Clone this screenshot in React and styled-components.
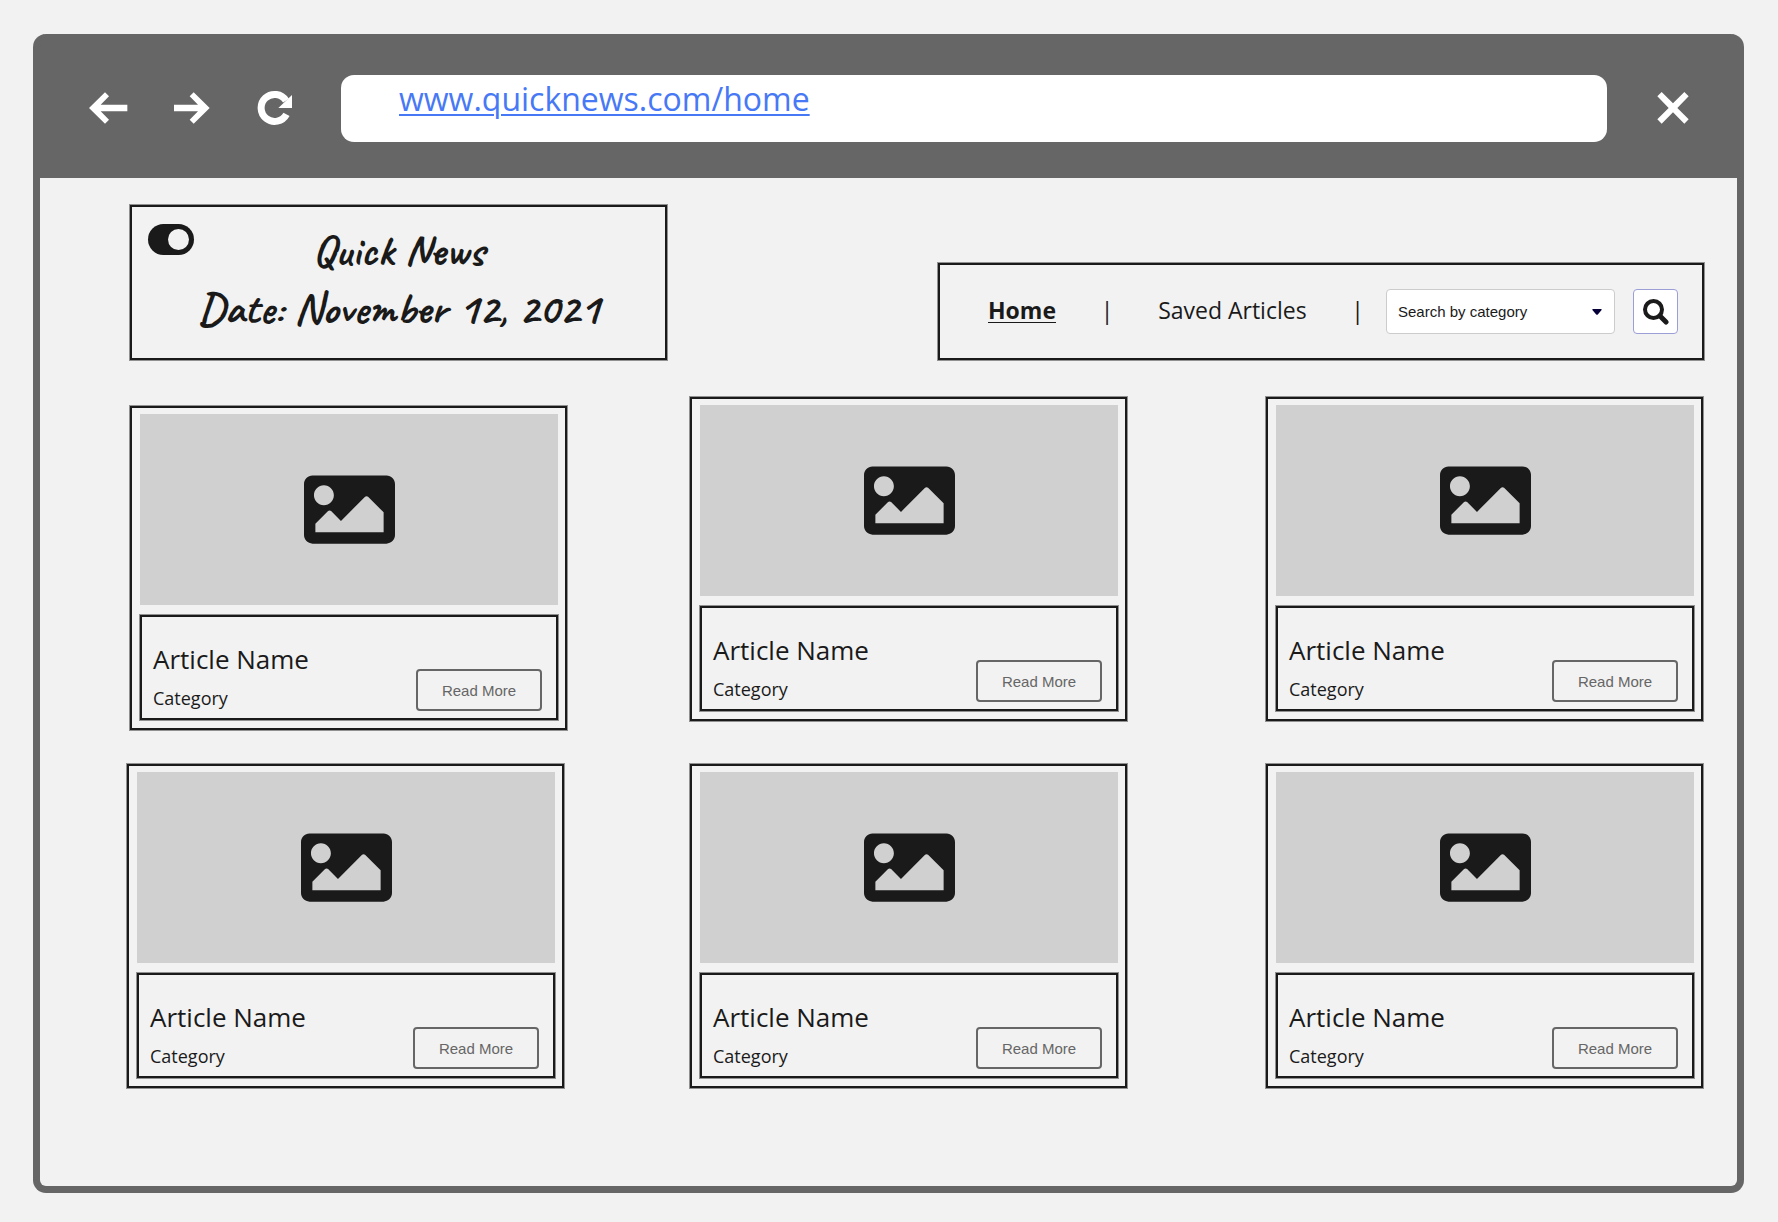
import React, { useState } from "react";
import styled, { createGlobalStyle, css } from "styled-components";
import { FaImage } from "react-icons/fa";

const ink = "#1a1a1a";
const chrome = "#666666";
const paper = "#f2f2f2";

const GlobalStyle = createGlobalStyle`
  *, *::before, *::after { box-sizing: border-box; }
  body {
    margin: 0;
    background: ${paper};
    color: ${ink};
    font-family: "Open Sans", "Noto Sans", sans-serif;
  }
  button, select, input { font: inherit; color: inherit; }
`;

const outlined = css`
  border: 2px solid ${ink};
  box-shadow: 0 0 0 1px rgba(26, 26, 26, 0.45);
`;

const Page = styled.div`
  display: flex;
  min-height: 100vh;
  padding: 34px 34px 29px 33px;
`;

const BrowserWindow = styled.div`
  flex: 1;
  min-width: 0;
  display: flex;
  flex-direction: column;
  border: 7px solid ${chrome};
  border-top: 0;
  border-radius: 13px;
  background: ${chrome};
`;

const Toolbar = styled.header`
  display: flex;
  align-items: center;
  height: 144px;
  padding: 4px 43px 0 47px;
`;

const ToolButtons = styled.div`
  display: flex;
  gap: 40px;
  margin-right: 45px;
`;

const ToolButton = styled.button`
  display: grid;
  place-items: center;
  width: 43px;
  height: 44px;
  padding: 0;
  border: 0;
  background: none;
  cursor: pointer;

  svg { display: block; fill: #fff; }
`;

const AddressBar = styled.div`
  flex: 1;
  height: 67px;
  margin-right: 44px;
  padding: 2px 58px;
  border-radius: 13px;
  background: #fff;
`;

const Address = styled.a`
  font-size: 32px;
  line-height: 44px;
  color: #4778f5;
  text-decoration-thickness: 2px;
  text-underline-offset: 3px;
`;

const Content = styled.main`
  flex: 1;
  padding: 27px 33px 90px 87px;
  border-radius: 0 0 6px 6px;
  background: ${paper};
`;

const Masthead = styled.div`
  display: flex;
  align-items: flex-end;
  justify-content: space-between;
  gap: 40px;
  padding-left: 3px;
  margin-bottom: 37px;
`;

const TitleBox = styled.section`
  ${outlined}
  display: flex;
  flex: 0 1 537px;
  height: 155px;
  padding: 15px 16px;
`;

const Toggle = styled.input`
  appearance: none;
  flex: none;
  display: flex;
  align-items: center;
  width: 46px;
  height: 31px;
  margin: 2px 0;
  padding: 0 5px;
  border-radius: 16px;
  background: ${ink};
  cursor: pointer;

  &::before {
    content: "";
    width: 21px;
    height: 21px;
    border-radius: 50%;
    background: ${paper};
  }
  &:checked { justify-content: flex-end; }
`;

const Titles = styled.div`
  flex: 1;
  padding-right: 46px;
  text-align: center;
  font-family: Caveat, cursive;
  font-size: 45px;
  line-height: 58px;
  white-space: nowrap;
`;

const Title = styled.h1`
  margin: 0;
  font: inherit;
  font-weight: 700;
`;

const DateLine = styled.p`
  margin: 0;
  font-weight: 700;
`;

const NavBox = styled.nav`
  ${outlined}
  display: flex;
  align-items: center;
  flex: 0 1 766px;
  height: 97px;
  padding: 0 24px 0 48px;
  white-space: nowrap;
`;

const Links = styled.div`
  flex: 1;
  display: flex;
  justify-content: space-between;
  padding: 0 22px 4px 0;
  font-size: 23px;
  line-height: 30px;
`;

const NavLink = styled.a`
  color: ${ink};
  font-weight: ${(p) => (p.$active ? 700 : 400)};
  text-decoration: ${(p) => (p.$active ? "underline" : "none")};
  text-decoration-thickness: 1px;
  text-underline-offset: 3px;
`;

const SearchForm = styled.form`
  display: flex;
  gap: 18px;
`;

const SelectWrap = styled.div`
  display: grid;
  align-items: center;

  > * { grid-area: 1 / 1; }
  svg { justify-self: end; margin-right: 13px; pointer-events: none; }
`;

const CategorySelect = styled.select`
  appearance: none;
  width: 229px;
  height: 45px;
  padding: 0 32px 0 11px;
  border: 1px solid #cccccc;
  border-radius: 4px;
  background: #fff;
  font-family: "Liberation Sans", Arial, sans-serif;
  font-size: 15px;
`;

const SearchButton = styled.button`
  display: grid;
  place-items: center;
  width: 45px;
  height: 45px;
  padding: 0;
  border: 1px solid #9c9fd6;
  border-radius: 4px;
  background: #fff;
  cursor: pointer;
`;

const Grid = styled.div`
  display: grid;
  grid-template-columns: 440fr 453fr 438fr;
  column-gap: 123px;
  row-gap: 34px;
`;

const Card = styled.article`
  ${outlined}
  display: flex;
  flex-direction: column;
  gap: 10px;
  width: min(100%, 437px);
  align-self: ${(p) => (p.$lowered ? "end" : "start")};
  justify-self: ${(p) => (p.$lowered ? "end" : "start")};
  margin-top: ${(p) => (p.$lowered ? "9px" : "0")};
  padding: 6px 7px 8px 8px;
`;

const Picture = styled.div`
  display: grid;
  place-items: center;
  height: 191px;
  background: #d0d0d0;
`;

const Summary = styled.div`
  ${outlined}
  display: flex;
  align-items: flex-end;
  justify-content: space-between;
  height: 105px;
  padding: 0 14px 7px 11px;
`;

const Name = styled.h2`
  margin: 0;
  font-size: 26px;
  font-weight: 400;
  line-height: 52px;
`;

const Category = styled.p`
  margin: 0;
  font-size: 18px;
  line-height: 26px;
`;

const ReadMore = styled.button`
  width: 126px;
  height: 42px;
  padding: 0;
  border: 2px solid ${chrome};
  border-radius: 4px;
  background: none;
  color: ${chrome};
  font-family: "Liberation Sans", Arial, sans-serif;
  font-size: 15px;
  cursor: pointer;
`;

const BackIcon = () => (
  <svg width="39" height="32" viewBox="207 217 117 96" aria-hidden="true">
    <path d="M207 265l48-47 12 12-25 25h80v20h-80l25 25-12 12z" />
  </svg>
);

const ForwardIcon = () => (
  <svg width="36" height="32" viewBox="462 217 108 96" aria-hidden="true">
    <path d="M569 265l-48-47-12 12 25 25h-72v20h72l-25 25 12 12z" />
  </svg>
);

const ReloadIcon = () => (
  <svg width="36" height="36" viewBox="711 210 108 108" aria-hidden="true">
    <path
      d="M798 242A40.5 40.5 0 1 0 799.5 283"
      style={{ fill: "none" }}
      stroke="#fff"
      strokeWidth="21"
    />
    <path d="M816 225v39h-41z" />
  </svg>
);

const CloseIcon = () => (
  <svg width="32" height="32" viewBox="290 214 96 96" aria-hidden="true">
    <path d="M304 214l34 34 34-34 13 13-34 35 34 34-13 13-34-34-34 34-13-13 34-34-34-35z" />
  </svg>
);

const CaretIcon = () => (
  <svg width="10" height="6" viewBox="0 0 10 6" aria-hidden="true">
    <path d="M1 0h8q1.2.5.4 1.3L5.8 5.4q-.8.8-1.6 0L.6 1.3Q-.2.5 1 0z" fill="#050038" />
  </svg>
);

const SearchIcon = () => (
  <svg width="26" height="26" viewBox="0 0 26 26" fill="none" stroke={ink} aria-hidden="true">
    <circle cx="10.5" cy="10.5" r="8.5" strokeWidth="4" />
    <path d="M17 17l6 6" strokeWidth="5" strokeLinecap="round" />
  </svg>
);

const articles = [1, 2, 3, 4, 5, 6].map((id) => ({
  id,
  name: "Article Name",
  category: "Category",
  lowered: id === 1,
}));

function ArticleCard({ article }) {
  return (
    <Card $lowered={article.lowered}>
      <Picture>
        <FaImage size={91} color={ink} aria-hidden="true" />
      </Picture>
      <Summary>
        <div>
          <Name>{article.name}</Name>
          <Category>{article.category}</Category>
        </div>
        <ReadMore type="button">Read More</ReadMore>
      </Summary>
    </Card>
  );
}

export default function App() {
  const [on, setOn] = useState(true);

  return (
    <>
      <GlobalStyle />
      <Page>
        <BrowserWindow>
          <Toolbar>
            <ToolButtons>
              <ToolButton type="button" aria-label="Back"><BackIcon /></ToolButton>
              <ToolButton type="button" aria-label="Forward"><ForwardIcon /></ToolButton>
              <ToolButton type="button" aria-label="Reload"><ReloadIcon /></ToolButton>
            </ToolButtons>
            <AddressBar>
              <Address href="#home">www.quicknews.com/home</Address>
            </AddressBar>
            <ToolButton type="button" aria-label="Close"><CloseIcon /></ToolButton>
          </Toolbar>
          <Content>
            <Masthead>
              <TitleBox>
                <Toggle
                  type="checkbox"
                  role="switch"
                  aria-label="Theme"
                  checked={on}
                  onChange={(e) => setOn(e.target.checked)}
                />
                <Titles>
                  <Title>Quick News</Title>
                  <DateLine>Date: November 12, 2021</DateLine>
                </Titles>
              </TitleBox>
              <NavBox>
                <Links>
                  <NavLink href="#home" $active>Home</NavLink>
                  <span>|</span>
                  <NavLink href="#saved">Saved Articles</NavLink>
                  <span>|</span>
                </Links>
                <SearchForm onSubmit={(e) => e.preventDefault()}>
                  <SelectWrap>
                    <CategorySelect aria-label="Search by category">
                      <option>Search by category</option>
                    </CategorySelect>
                    <CaretIcon />
                  </SelectWrap>
                  <SearchButton type="submit" aria-label="Search"><SearchIcon /></SearchButton>
                </SearchForm>
              </NavBox>
            </Masthead>
            <Grid>
              {articles.map((article) => (
                <ArticleCard key={article.id} article={article} />
              ))}
            </Grid>
          </Content>
        </BrowserWindow>
      </Page>
    </>
  );
}
